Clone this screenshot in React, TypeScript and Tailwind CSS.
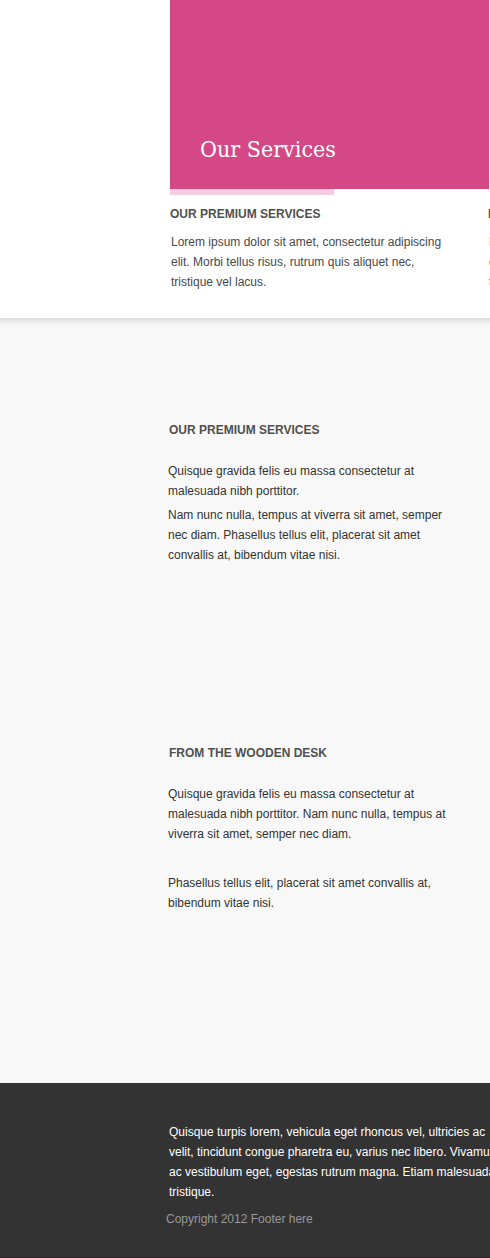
import React from "react";

type CardProps = { title: string; text: string };

function ServiceSummary({ title, text }: CardProps) {
  return (
    <article className="w-[318px] shrink-0">
      <h2 className="text-xs leading-5 font-bold text-[#505050] uppercase">{title}</h2>
      <p className="mt-2 ml-px w-[280px] text-xs leading-5 text-[#484848]">{text}</p>
    </article>
  );
}

type SectionProps = { title: string; children: React.ReactNode };

function TextSection({ title, children }: SectionProps) {
  return (
    <section className="max-w-[288px]">
      <h2 className="ml-px text-xs leading-5 font-bold text-[#505050] uppercase">{title}</h2>
      <div className="mt-[21px] text-xs leading-5 text-[#333333]">{children}</div>
    </section>
  );
}

const intro =
  "Lorem ipsum dolor sit amet, consectetur adipiscing elit. Morbi tellus risus, rutrum quis aliquet nec, tristique vel lacus.";

export default function App() {
  return (
    <div className="overflow-hidden bg-[#f8f8f8] font-['Liberation_Sans',Arial,sans-serif]">
      <header className="bg-white pb-[26px] pl-[170px]">
        <div className="mr-px flex h-[189px] items-end bg-[#d44885] px-[30px] pb-6">
          <h1 className="font-['DejaVu_Serif_Condensed','DejaVu_Serif',serif] text-[23px] leading-8 whitespace-nowrap text-white">
            Our Services
          </h1>
        </div>
        <div className="h-1.5 w-[164px] bg-[#f8cce0]" />
        <div className="mt-[9px] flex">
          <ServiceSummary title="Our premium services" text={intro} />
          <ServiceSummary title="From the wooden desk" text={intro} />
        </div>
      </header>

      <main className="pl-[168px]">
        <div className="-ml-[168px] h-2 bg-linear-to-b from-[#e0e0e0] to-[#f8f8f8]" />
        <div className="pt-[94px] pb-[170px]">
          <TextSection title="Our premium services">
            <p>Quisque gravida felis eu massa consectetur at malesuada nibh porttitor.</p>
            <p className="mt-1">
              Nam nunc nulla, tempus at viverra sit amet, semper nec diam. Phasellus tellus elit,
              placerat sit amet convallis at, bibendum vitae nisi.
            </p>
          </TextSection>
          <div className="mt-[178px]">
            <TextSection title="From the wooden desk">
              <p>
                Quisque gravida felis eu massa consectetur at malesuada nibh porttitor. Nam nunc
                nulla, tempus at viverra sit amet, semper nec diam.
              </p>
              <p className="mt-[29px]">
                Phasellus tellus elit, placerat sit amet convallis at, bibendum vitae nisi.
              </p>
            </TextSection>
          </div>
        </div>
      </main>

      <footer className="border-b border-[#2b2628] bg-[#333333] pt-[39px] pb-7 pl-[166px] text-xs leading-5">
        <p className="ml-[3px] whitespace-nowrap text-white">
          Quisque turpis lorem, vehicula eget rhoncus vel, ultricies ac
          <br />
          velit, tincidunt congue pharetra eu, varius nec libero. Vivamus
          <br />
          ac vestibulum eget, egestas rutrum magna. Etiam malesuada
          <br />
          tristique.
        </p>
        <p className="mt-[7px] text-[#999999]">Copyright 2012 Footer here</p>
      </footer>
    </div>
  );
}
